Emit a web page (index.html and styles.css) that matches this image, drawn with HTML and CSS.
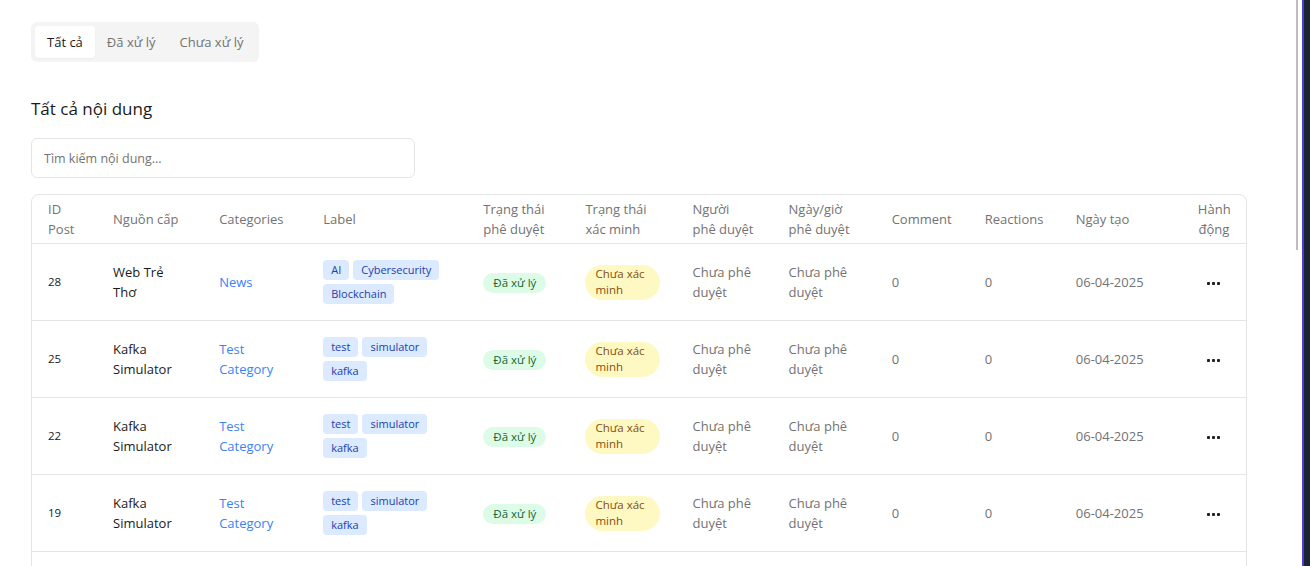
FILE: index.html
```html
<!DOCTYPE html>
<html lang="vi">
<head>
<meta charset="utf-8">
<title>Nội dung</title>
<link rel="stylesheet" href="styles.css">
</head>
<body>
<div class="app">
  <main class="page">
    <div class="tabs">
      <button class="tab active">Tất cả</button>
      <button class="tab">Đã xử lý</button>
      <button class="tab">Chưa xử lý</button>
    </div>

    <h2 class="title">Tất cả nội dung</h2>

    <input class="search" type="text" placeholder="Tìm kiếm nội dung...">

    <div class="table-wrap">
      <table class="grid">
        <colgroup>
          <col class="c-id"><col class="c-src"><col class="c-cat"><col class="c-lbl">
          <col class="c-ap"><col class="c-vf"><col class="c-who"><col class="c-when">
          <col class="c-cm"><col class="c-re"><col class="c-date"><col class="c-act">
        </colgroup>
        <thead>
          <tr>
            <th>ID Post</th>
            <th>Nguồn cấp</th>
            <th>Categories</th>
            <th>Label</th>
            <th>Trạng thái phê duyệt</th>
            <th>Trạng thái xác minh</th>
            <th>Người<br>phê duyệt</th>
            <th>Ngày/giờ phê duyệt</th>
            <th>Comment</th>
            <th>Reactions</th>
            <th>Ngày tạo</th>
            <th class="center">Hành động</th>
          </tr>
        </thead>
        <tbody>
          <tr>
            <td class="id">28</td>
            <td class="strong">Web Trẻ Thơ</td>
            <td class="link">News</td>
            <td><div class="tags"><span class="tag">AI</span><span class="tag">Cybersecurity</span><span class="tag">Blockchain</span></div></td>
            <td><span class="badge ok">Đã xử lý</span></td>
            <td><span class="badge warn">Chưa xác minh</span></td>
            <td class="muted">Chưa phê duyệt</td>
            <td class="muted">Chưa phê duyệt</td>
            <td class="muted">0</td>
            <td class="muted">0</td>
            <td class="muted">06-04-2025</td>
            <td class="center"><button class="more" aria-label="Hành động"><svg width="13" height="3" viewBox="0 0 13 3"><rect x="0" y="0" width="3" height="3" rx="0.8"/><rect x="5" y="0" width="3" height="3" rx="0.8"/><rect x="10" y="0" width="3" height="3" rx="0.8"/></svg></button></td>
          </tr>
          <tr>
            <td class="id">25</td>
            <td class="strong">Kafka Simulator</td>
            <td class="link">Test Category</td>
            <td><div class="tags"><span class="tag">test</span><span class="tag">simulator</span><span class="tag">kafka</span></div></td>
            <td><span class="badge ok">Đã xử lý</span></td>
            <td><span class="badge warn">Chưa xác minh</span></td>
            <td class="muted">Chưa phê duyệt</td>
            <td class="muted">Chưa phê duyệt</td>
            <td class="muted">0</td>
            <td class="muted">0</td>
            <td class="muted">06-04-2025</td>
            <td class="center"><button class="more" aria-label="Hành động"><svg width="13" height="3" viewBox="0 0 13 3"><rect x="0" y="0" width="3" height="3" rx="0.8"/><rect x="5" y="0" width="3" height="3" rx="0.8"/><rect x="10" y="0" width="3" height="3" rx="0.8"/></svg></button></td>
          </tr>
          <tr>
            <td class="id">22</td>
            <td class="strong">Kafka Simulator</td>
            <td class="link">Test Category</td>
            <td><div class="tags"><span class="tag">test</span><span class="tag">simulator</span><span class="tag">kafka</span></div></td>
            <td><span class="badge ok">Đã xử lý</span></td>
            <td><span class="badge warn">Chưa xác minh</span></td>
            <td class="muted">Chưa phê duyệt</td>
            <td class="muted">Chưa phê duyệt</td>
            <td class="muted">0</td>
            <td class="muted">0</td>
            <td class="muted">06-04-2025</td>
            <td class="center"><button class="more" aria-label="Hành động"><svg width="13" height="3" viewBox="0 0 13 3"><rect x="0" y="0" width="3" height="3" rx="0.8"/><rect x="5" y="0" width="3" height="3" rx="0.8"/><rect x="10" y="0" width="3" height="3" rx="0.8"/></svg></button></td>
          </tr>
          <tr>
            <td class="id">19</td>
            <td class="strong">Kafka Simulator</td>
            <td class="link">Test Category</td>
            <td><div class="tags"><span class="tag">test</span><span class="tag">simulator</span><span class="tag">kafka</span></div></td>
            <td><span class="badge ok">Đã xử lý</span></td>
            <td><span class="badge warn">Chưa xác minh</span></td>
            <td class="muted">Chưa phê duyệt</td>
            <td class="muted">Chưa phê duyệt</td>
            <td class="muted">0</td>
            <td class="muted">0</td>
            <td class="muted">06-04-2025</td>
            <td class="center"><button class="more" aria-label="Hành động"><svg width="13" height="3" viewBox="0 0 13 3"><rect x="0" y="0" width="3" height="3" rx="0.8"/><rect x="5" y="0" width="3" height="3" rx="0.8"/><rect x="10" y="0" width="3" height="3" rx="0.8"/></svg></button></td>
          </tr>
          <tr>
            <td class="id">16</td>
            <td class="strong">Kafka Simulator</td>
            <td class="link">Test Category</td>
            <td><div class="tags"><span class="tag">test</span><span class="tag">simulator</span><span class="tag">kafka</span></div></td>
            <td><span class="badge ok">Đã xử lý</span></td>
            <td><span class="badge warn">Chưa xác minh</span></td>
            <td class="muted">Chưa phê duyệt</td>
            <td class="muted">Chưa phê duyệt</td>
            <td class="muted">0</td>
            <td class="muted">0</td>
            <td class="muted">06-04-2025</td>
            <td class="center"><button class="more" aria-label="Hành động"><svg width="13" height="3" viewBox="0 0 13 3"><rect x="0" y="0" width="3" height="3" rx="0.8"/><rect x="5" y="0" width="3" height="3" rx="0.8"/><rect x="10" y="0" width="3" height="3" rx="0.8"/></svg></button></td>
          </tr>
        </tbody>
      </table>
    </div>
  </main>
  <div class="thumb"></div>
  <div class="edge"></div>
</div>
</body>
</html>
```

FILE: styles.css
```css
* { box-sizing: border-box; }

html, body {
  margin: 0;
  height: 100%;
  overflow: hidden;
  background: #ffffff;
}

body {
  font-family: "Open Sans", "Noto Sans", "Liberation Sans", sans-serif;
  font-size: 13px;
  line-height: 20px;
  color: #1a1a1a;
}

.app {
  display: flex;
  height: 100vh;
  position: relative;
}

.page {
  flex: 1;
  padding: 22px 31px;
  overflow: hidden;
}

.thumb {
  position: absolute;
  top: 0;
  right: 12px;
  width: 2px;
  height: 250px;
  background: #bdbdbd;
}

.edge {
  width: 8px;
  flex: none;
  background: #1c2333;
  border-left: 2px solid #4b3fd1;
}

/* Tabs */
.tabs {
  display: inline-flex;
  padding: 4px;
  background: #f4f4f4;
  border-radius: 6px;
}

.tab {
  font: inherit;
  font-size: 13px;
  height: 32px;
  padding: 0 12px;
  border: 0;
  border-radius: 4px;
  background: transparent;
  color: #737373;
  cursor: pointer;
}

.tab.active {
  background: #ffffff;
  color: #1a1a1a;
  box-shadow: 0 1px 2px rgba(0, 0, 0, 0.04);
}

/* Heading */
.title {
  margin: 33px 0 15px;
  font-size: 17px;
  line-height: 28px;
  font-weight: 400;
  color: #1a1a1a;
}

/* Search */
.search {
  display: block;
  width: 384px;
  height: 40px;
  padding: 0 12px;
  border: 1px solid #e5e5e5;
  border-radius: 6px;
  font: inherit;
  font-size: 12.5px;
  color: #1a1a1a;
  outline: none;
}

.search::placeholder { color: #737373; }

/* Table */
.table-wrap {
  margin-top: 16px;
  width: 1216px;
  border: 1px solid #e5e5e5;
  border-radius: 8px;
  overflow: hidden;
}

.grid {
  width: 100%;
  table-layout: fixed;
  border-collapse: collapse;
}

.c-id { width: 65px; }
.c-src { width: 106px; }
.c-cat { width: 104px; }
.c-lbl { width: 160px; }
.c-ap { width: 102px; }
.c-vf { width: 107px; }
.c-who { width: 96px; }
.c-when { width: 103px; }
.c-cm { width: 93px; }
.c-re { width: 91px; }
.c-date { width: 122px; }
.c-act { width: 64px; }

.grid th {
  padding: 4px 16px;
  text-align: left;
  font-weight: 400;
  color: #737373;
  vertical-align: middle;
  border-bottom: 1px solid #e5e5e5;
}

.grid td {
  padding: 16px;
  vertical-align: middle;
  border-bottom: 1px solid #e5e5e5;
}

.grid .center { text-align: center; }

.grid td.id { font-size: 11.5px; color: #1a1a1a; }
.grid td.strong { color: #1a1a1a; }
.grid td.link { color: #3b82f6; }
.grid td.muted { color: #737373; }

.tags {
  display: flex;
  flex-wrap: wrap;
  gap: 4px;
}

.tag {
  display: inline-block;
  padding: 0 8px;
  height: 20px;
  line-height: 20px;
  font-size: 11px;
  border-radius: 4px;
  background: #dbeafe;
  color: #1e40af;
}

.badge {
  display: inline-block;
  font-size: 11.5px;
  border-radius: 999px;
}

.badge.ok {
  padding: 0 10px;
  line-height: 20px;
  background: #dcfce7;
  color: #166534;
}

.badge.warn {
  padding: 1px 10px;
  line-height: 16.5px;
  max-width: 75px;
  background: #fef9c3;
  color: #854d0e;
  border-radius: 18px;
}

.more {
  border: 0;
  background: transparent;
  padding: 0;
  display: inline-block;
  vertical-align: middle;
  line-height: 0;
  cursor: pointer;
  fill: #222222;
}

.more svg { display: block; }
```
